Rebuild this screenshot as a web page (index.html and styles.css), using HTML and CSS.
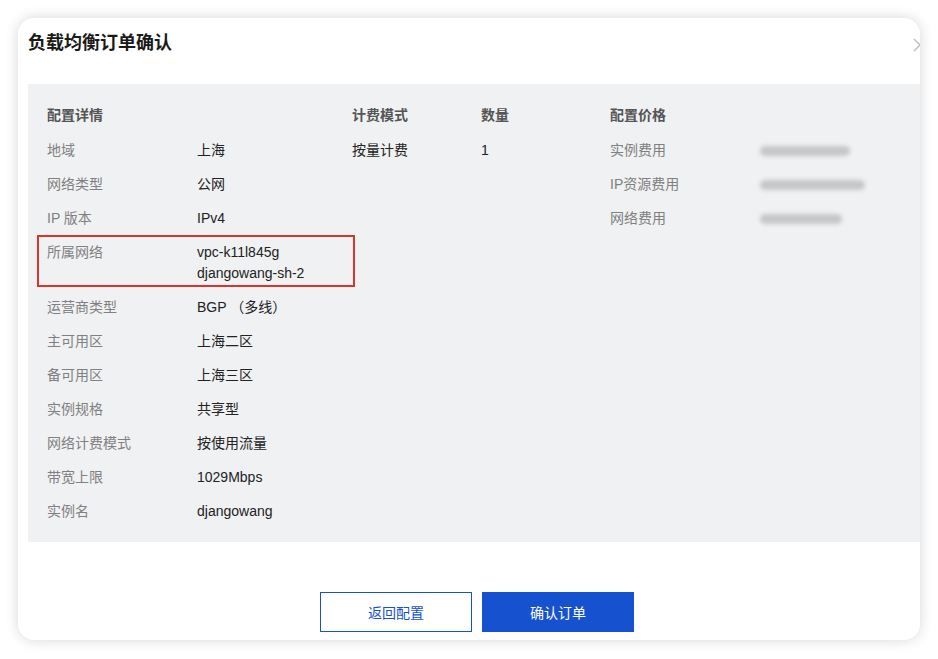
FILE: index.html
```html
<!DOCTYPE html>
<html lang="zh-CN">
<head>
  <meta charset="UTF-8" />
  <meta name="viewport" content="width=device-width, initial-scale=1" />
  <title>负载均衡订单确认</title>
  <link rel="stylesheet" href="styles.css">
</head>
<body>

  <div class="modal-clip" role="dialog" aria-modal="true" aria-labelledby="modalTitle">
    <div class="modal">
      <button class="close-btn" aria-label="关闭">
        <svg width="14" height="14" viewBox="0 0 14 14" fill="none" stroke="#bcbcbc" stroke-width="1.3">
          <path d="M1 1 L13 13 M13 1 L1 13" />
        </svg>
      </button>

      <h3 class="modal-title" id="modalTitle">负载均衡订单确认</h3>

      <div class="detail-panel">
        <div class="detail-grid">
          <!-- header row -->
          <div class="th c-label">配置详情</div>
          <div class="th c-bill">计费模式</div>
          <div class="th c-qty">数量</div>
          <div class="th c-plabel">配置价格</div>

          <div class="lbl c-label">地域</div>
          <div class="val c-value">上海</div>
          <div class="val c-bill">按量计费</div>
          <div class="val c-qty">1</div>
          <div class="lbl c-plabel">实例费用</div>
          <div class="c-pvalue"><span class="blurred" style="width: 90px"></span></div>

          <div class="lbl c-label">网络类型</div>
          <div class="val c-value">公网</div>
          <div class="lbl c-plabel">IP资源费用</div>
          <div class="c-pvalue"><span class="blurred" style="width: 105px"></span></div>

          <div class="lbl c-label">IP 版本</div>
          <div class="val c-value">IPv4</div>
          <div class="lbl c-plabel">网络费用</div>
          <div class="c-pvalue"><span class="blurred" style="width: 82px"></span></div>

          <div class="lbl c-label marked">所属网络<span class="mark-box"></span></div>
          <div class="val c-value">vpc-k11l845g<br>djangowang-sh-2</div>

          <div class="lbl c-label">运营商类型</div>
          <div class="val c-value">BGP （多线）</div>

          <div class="lbl c-label">主可用区</div>
          <div class="val c-value">上海二区</div>

          <div class="lbl c-label">备可用区</div>
          <div class="val c-value">上海三区</div>

          <div class="lbl c-label">实例规格</div>
          <div class="val c-value">共享型</div>

          <div class="lbl c-label">网络计费模式</div>
          <div class="val c-value">按使用流量</div>

          <div class="lbl c-label">带宽上限</div>
          <div class="val c-value">1029Mbps</div>

          <div class="lbl c-label">实例名</div>
          <div class="val c-value">djangowang</div>
        </div>
      </div>

      <div class="modal-footer">
        <button class="btn btn-outline">返回配置</button>
        <button class="btn btn-primary">确认订单</button>
      </div>
    </div>
  </div>

</body>
</html>
```

FILE: styles.css
```css
body {
  font-family: 'Helvetica Neue', 'Liberation Sans', 'Noto Sans CJK SC', sans-serif;
  background: #fff;
  margin: 0;
  padding: 18px;
}
.modal-clip {
  width: 902px;
  height: 622px;
  border-radius: 16px;
  overflow: hidden;
  background: #fff;
  box-shadow: 0 0 14px rgba(0, 0, 0, 0.16);
}
.modal {
  width: 918px;
  position: relative;
}
.close-btn {
  position: absolute;
  top: 20px;
  right: 9px;
  width: 14px;
  height: 14px;
  padding: 0;
  border: none;
  background: transparent;
  cursor: pointer;
}
.close-btn svg {
  display: block;
}
.modal-title {
  margin: 0;
  height: 66px;
  box-sizing: border-box;
  padding: 12px 10px 0;
  font-size: 18px;
  line-height: 26px;
  font-weight: 700;
  color: #1a1a1a;
}
.detail-panel {
  margin: 0 10px;
  background: #f0f1f3;
  padding: 21px 19px 20px;
}
.detail-grid {
  display: grid;
  grid-template-columns: 150px 155px 129px 129px 150px 1fr;
  row-gap: 13px;
  font-size: 14px;
  line-height: 21px;
}
.c-label { grid-column: 1; }
.c-value { grid-column: 2; }
.c-bill { grid-column: 3; }
.c-qty { grid-column: 4; }
.c-plabel { grid-column: 5; }
.c-pvalue {
  grid-column: 6;
  display: flex;
  align-items: center;
}
.th {
  color: #555;
  font-weight: 600;
  padding-bottom: 1px;
}
.th.c-label {
  grid-column: 1 / 3;
}
.lbl {
  color: #808080;
}
.val {
  color: #222;
}
.blurred {
  display: inline-block;
  height: 10px;
  border-radius: 5px;
  background: #c6c6c8;
  filter: blur(2px);
}
/* red annotation around the network row */
.marked {
  position: relative;
}
.mark-box {
  position: absolute;
  left: -10px;
  top: -7px;
  width: 318px;
  height: 52px;
  box-sizing: border-box;
  border: 2px solid #d8352b;
}
.modal-footer {
  display: flex;
  justify-content: center;
  gap: 10px;
  padding: 50px 0 8px;
}
.btn {
  width: 152px;
  height: 40px;
  font-family: inherit;
  font-size: 14px;
  cursor: pointer;
  border: 1px solid #1652cf;
}
.btn-outline {
  background: #fff;
  color: #1652cf;
}
.btn-primary {
  background: #1652cf;
  color: #fff;
}
```
